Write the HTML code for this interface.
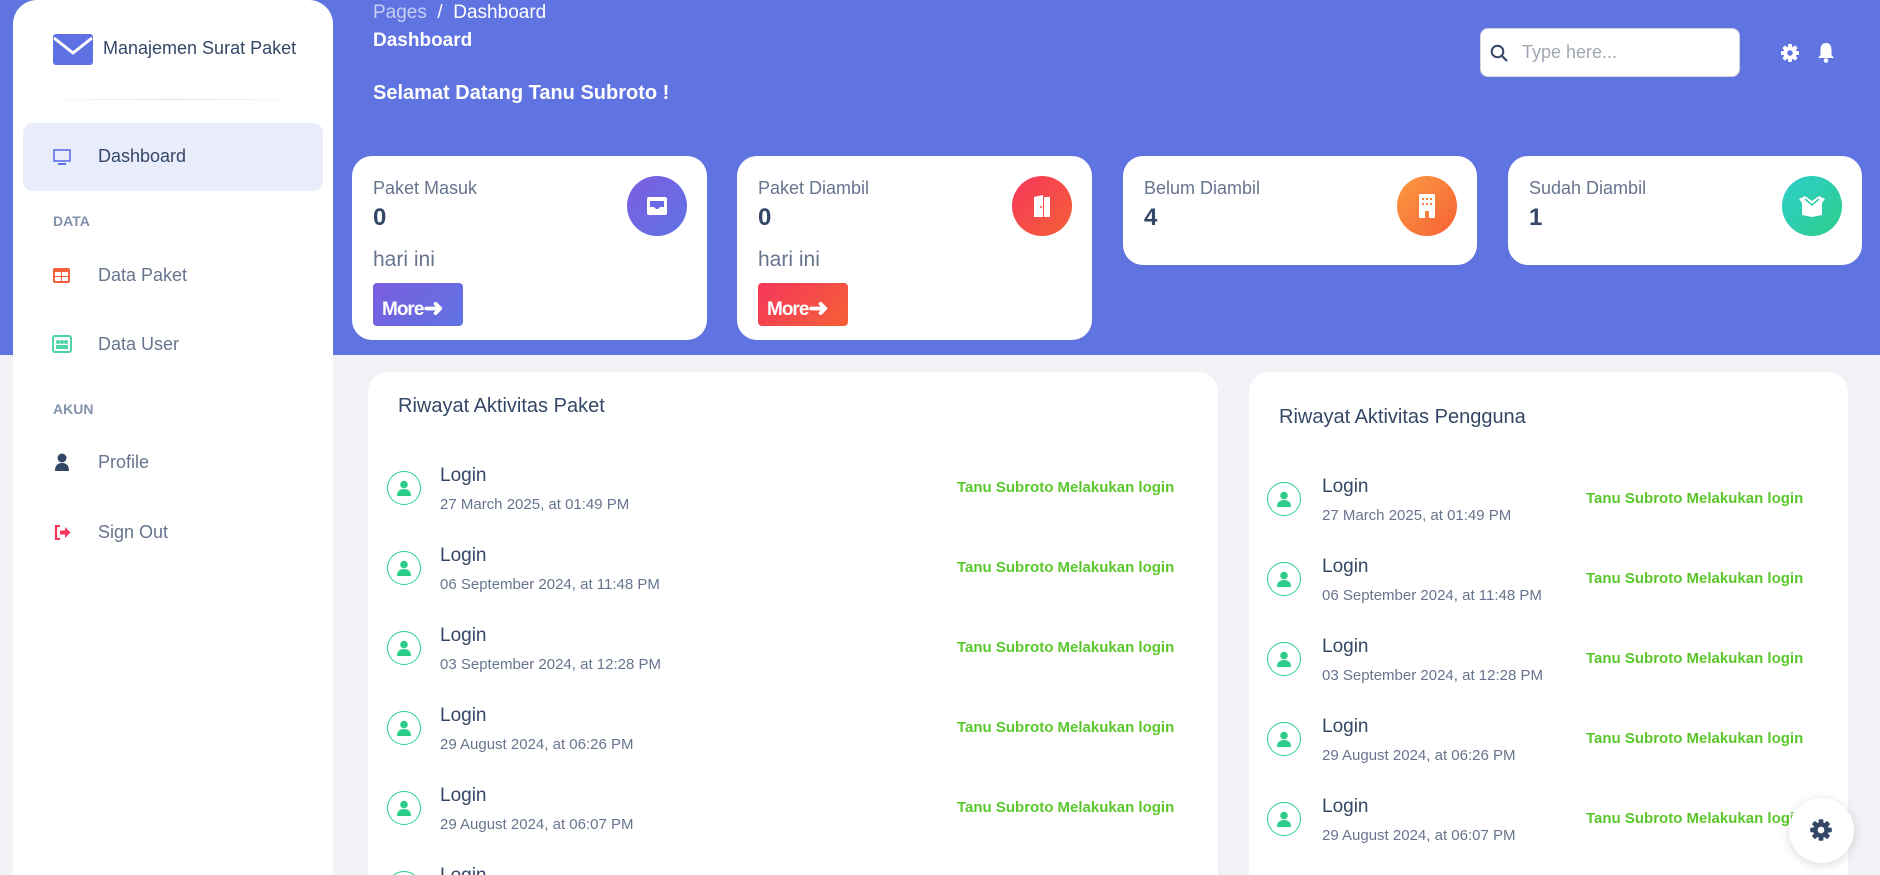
<!DOCTYPE html>
<html style="overflow:hidden;height:875px"><head><meta charset="utf-8"><style>
*{box-sizing:border-box;margin:0;padding:0}
body{width:1880px;height:875px;overflow:hidden;background:#f0f2f5;font-family:"Liberation Sans",sans-serif;position:relative;color:#344767}
.hdr{position:absolute;left:0;top:0;width:1880px;height:355px;background:#5f73e1}
.side{position:absolute;left:13px;top:0;width:320px;height:875px;background:#fff;border-radius:24px 24px 0 0}
.abs{position:absolute}
.nav{position:absolute;left:98px;font-size:18px;color:#67748e}
.sec{position:absolute;left:53px;font-size:14px;font-weight:bold;color:#8392ab}
.card{position:absolute;background:#fff;border-radius:20px;overflow:hidden}
.ct{position:absolute;left:21px;top:22px;font-size:18px;color:#67748e}
.cv{position:absolute;left:21px;top:48px;font-size:24px;font-weight:bold;color:#344767}
.ch{position:absolute;left:21px;top:92px;font-size:21px;color:#67748e}
.more{position:absolute;left:21px;top:127px;width:90px;height:43px;border-radius:4px;color:#fff;font-weight:bold;font-size:19px;padding:10px 0 0 9px;letter-spacing:-1px}
.ic{position:absolute;right:20px;top:20px;width:60px;height:60px;border-radius:50%;display:flex;align-items:center;justify-content:center}
.ri{position:absolute;width:34px;height:34px;border:1.5px solid #2dce89;border-radius:50%;display:flex;align-items:center;justify-content:center}
.rl{position:absolute;font-size:19px;color:#344767}
.rd{position:absolute;font-size:15px;color:#67748e}
.rg{position:absolute;font-size:15px;font-weight:bold;color:#5bc72c}
</style></head><body>
<div class="hdr"></div>
<div class="side">
 <svg class="abs" style="left:40px;top:34px" width="40" height="31" viewBox="0 0 40 31"><rect width="40" height="31" rx="3" fill="#5e72e4"/><path d="M1 4 L20 19 L39 4" stroke="#fff" stroke-width="3" fill="none"/></svg>
 <div class="abs" style="left:90px;top:38px;font-size:18px;color:#344767">Manajemen Surat Paket</div>
 <div class="abs" style="left:22px;top:99px;width:276px;height:1px;background:linear-gradient(90deg,transparent,#e0e2e8,transparent)"></div>
 <div class="abs" style="left:10px;top:123px;width:300px;height:68px;border-radius:10px;background:#e9ecfb"></div>
 <svg class="abs" style="left:40px;top:149px" width="18" height="17" viewBox="0 0 18 17"><rect x="1" y="1" width="16" height="11" fill="none" stroke="#5e72e4" stroke-width="1.6"/><rect x="5" y="14" width="8" height="2" fill="#5e72e4"/></svg>
 <div class="nav" style="left:85px;top:146px;color:#344767">Dashboard</div>
 <div class="sec" style="left:40px;top:213px">DATA</div>
 <svg class="abs" style="left:40px;top:268px" width="17" height="15"><rect width="17" height="15" rx="2" fill="#f5603a"/><rect x="2" y="4" width="6" height="4" fill="#fff"/><rect x="9" y="4" width="6" height="4" fill="#fff"/><rect x="2" y="9" width="6" height="4" fill="#fff"/><rect x="9" y="9" width="6" height="4" fill="#fff"/></svg>
 <div class="nav" style="left:85px;top:265px">Data Paket</div>
 <svg class="abs" style="left:39px;top:335px" width="20" height="18"><rect x="1" y="1" width="18" height="16" rx="2" fill="none" stroke="#4fd3a2" stroke-width="2"/><circle cx="6" cy="7" r="2" fill="#4fd3a2"/><circle cx="10" cy="7" r="2" fill="#4fd3a2"/><circle cx="14" cy="7" r="2" fill="#4fd3a2"/><rect x="4" y="10" width="12" height="4" fill="#4fd3a2"/></svg>
 <div class="nav" style="left:85px;top:334px">Data User</div>
 <div class="sec" style="left:40px;top:401px">AKUN</div>
 <svg class="abs" style="left:42px;top:453px" width="14" height="18"><circle cx="7" cy="5" r="4.5" fill="#344767"/><path d="M0 18 Q0 10 7 10 Q14 10 14 18Z" fill="#344767"/></svg>
 <div class="nav" style="left:85px;top:452px">Profile</div>
 <svg class="abs" style="left:41px;top:525px" width="17" height="15"><path d="M6 1H2V14H6" stroke="#f5365c" stroke-width="2.2" fill="none"/><path d="M6 5.5H11V2L16.5 7.5 11 13V9.5H6Z" fill="#f5365c"/></svg>
 <div class="nav" style="left:85px;top:522px">Sign Out</div>
</div>
<div class="abs" style="left:373px;top:2px;font-size:19px;color:#fff"><span style="opacity:.65">Pages</span> &nbsp;/&nbsp; Dashboard</div>
<div class="abs" style="left:373px;top:30px;font-size:19px;font-weight:bold;color:#fff">Dashboard</div>
<div class="abs" style="left:373px;top:82px;font-size:20px;font-weight:bold;color:#fff">Selamat Datang Tanu Subroto !</div>
<div class="abs" style="left:1480px;top:28px;width:260px;height:49px;background:#fff;border-radius:8px;border:1px solid #d2d6da"></div>
<svg class="abs" style="left:1490px;top:44px" width="18" height="18"><circle cx="7.5" cy="7.5" r="5.8" fill="none" stroke="#344767" stroke-width="2"/><path d="M12 12L17 17" stroke="#344767" stroke-width="2.2"/></svg>
<div class="abs" style="left:1522px;top:42px;font-size:18px;color:#a0a6b4">Type here...</div>
<svg class="abs" style="left:1780px;top:43px" width="20" height="20" viewBox="0 0 20 20"><g fill="#fff"><circle cx="10" cy="10" r="6.5"/><rect x="8" y="1" width="4" height="18" rx="1"/><rect x="1" y="8" width="18" height="4" rx="1"/><rect x="8" y="1" width="4" height="18" rx="1" transform="rotate(45 10 10)"/><rect x="8" y="1" width="4" height="18" rx="1" transform="rotate(-45 10 10)"/></g><circle cx="10" cy="10" r="2.8" fill="#5f73e1"/></svg>
<svg class="abs" style="left:1817px;top:42px" width="18" height="22"><path d="M9 1C5 1 3.5 4 3.5 8V13L1 16H17L14.5 13V8C14.5 4 13 1 9 1Z" fill="#fff"/><circle cx="9" cy="18.5" r="2.3" fill="#fff"/></svg>

<div class="card" style="left:352px;top:156px;width:355px;height:184px">
 <div class="ct">Paket Masuk</div><div class="cv">0</div><div class="ch">hari ini</div>
 <div class="more" style="background:linear-gradient(135deg,#7b5ee0,#5f73e1)">More<span style="font-size:24px;position:relative;top:1px">&#10140;</span></div>
 <div class="ic" style="background:linear-gradient(135deg,#7e5ee2,#5e72e4)"><svg width="24" height="20"><path d="M2 3Q2 1 4 1H20Q22 1 22 3V17Q22 19 20 19H4Q2 19 2 17Z" fill="#fff"/><path d="M5 5H19V11H15L13 13H11L9 11H5Z" fill="#6a68e3"/></svg></div>
</div>
<div class="card" style="left:737px;top:156px;width:355px;height:184px">
 <div class="ct">Paket Diambil</div><div class="cv">0</div><div class="ch">hari ini</div>
 <div class="more" style="background:linear-gradient(135deg,#f5365c,#f56036)">More<span style="font-size:24px;position:relative;top:1px">&#10140;</span></div>
 <div class="ic" style="background:linear-gradient(135deg,#f5365c,#f56036)"><svg width="22" height="24"><path d="M3 23V3L12 1V23Z" fill="#fff"/><path d="M13 3H19V23H13" fill="#fff"/><circle cx="10" cy="13" r="1" fill="#f54848"/></svg></div>
</div>
<div class="card" style="left:1123px;top:156px;width:354px;height:109px">
 <div class="ct">Belum Diambil</div><div class="cv">4</div>
 <div class="ic" style="background:linear-gradient(135deg,#fb9a40,#f56036)"><svg width="16" height="24"><rect width="16" height="24" rx="1" fill="#fff"/><g fill="#f8823b"><rect x="3" y="4" width="2" height="2"/><rect x="7" y="4" width="2" height="2"/><rect x="11" y="4" width="2" height="2"/><rect x="3" y="9" width="2" height="2"/><rect x="7" y="9" width="2" height="2"/><rect x="11" y="9" width="2" height="2"/><rect x="6" y="17" width="4" height="7"/></g></svg></div>
</div>
<div class="card" style="left:1508px;top:156px;width:354px;height:109px">
 <div class="ct">Sudah Diambil</div><div class="cv">1</div>
 <div class="ic" style="background:linear-gradient(135deg,#2dcecc,#2dce89)"><svg width="28" height="22"><path d="M1 4L7 1L14 6L21 1L27 4L24 8V20L14 22L4 20V8Z" fill="#fff"/><path d="M7 4L14 10L21 4" stroke="#2dcea8" stroke-width="1.5" fill="none"/></svg></div>
</div>

<div class="card" style="left:368px;top:372px;width:850px;height:503px;border-radius:20px 20px 0 0">
 <div class="abs" style="left:30px;top:23px;font-size:20px;color:#344767">Riwayat Aktivitas Paket</div>
 <div id="ra"></div>
</div>
<div class="card" style="left:1249px;top:372px;width:599px;height:503px;border-radius:20px 20px 0 0">
 <div class="abs" style="left:30px;top:34px;font-size:20px;color:#344767">Riwayat Aktivitas Pengguna</div>
 <div id="rb"></div>
</div>
<div class="abs" style="left:1789px;top:798px;width:65px;height:65px;border-radius:50%;background:#fff;box-shadow:0 2px 10px rgba(0,0,0,.15)"></div>
<svg class="abs" style="left:1809px;top:818px" width="24" height="24" viewBox="0 0 20 20"><g fill="#344767"><circle cx="10" cy="10" r="6.5"/><rect x="8" y="1" width="4" height="18" rx="1"/><rect x="1" y="8" width="18" height="4" rx="1"/><rect x="8" y="1" width="4" height="18" rx="1" transform="rotate(45 10 10)"/><rect x="8" y="1" width="4" height="18" rx="1" transform="rotate(-45 10 10)"/></g><circle cx="10" cy="10" r="2.8" fill="#fff"/></svg>
<script>
var d=["27 March 2025, at 01:49 PM","06 September 2024, at 11:48 PM","03 September 2024, at 12:28 PM","29 August 2024, at 06:26 PM","29 August 2024, at 06:07 PM","29 August 2024, at 06:00 PM"];
var ico='<svg width="14" height="16"><circle cx="7" cy="4.5" r="3.8" fill="#2dce89"/><path d="M0 16Q0 9 7 9Q14 9 14 16Z" fill="#2dce89"/></svg>';
function b(id,top,ix,tx,gx){var h='';for(var i=0;i<6;i++){var y=top+i*80;h+='<div class="ri" style="left:'+ix+'px;top:'+(y-17)+'px">'+ico+'</div><div class="rl" style="left:'+tx+'px;top:'+(y-23)+'px">Login</div><div class="rd" style="left:'+tx+'px;top:'+(y+8)+'px">'+d[i]+'</div><div class="rg" style="left:'+gx+'px;top:'+(y-9)+'px">Tanu Subroto Melakukan login</div>';}document.getElementById(id).innerHTML=h;}
b('ra',116,19,72,589);b('rb',127,18,73,337);
</script>
</body></html>
